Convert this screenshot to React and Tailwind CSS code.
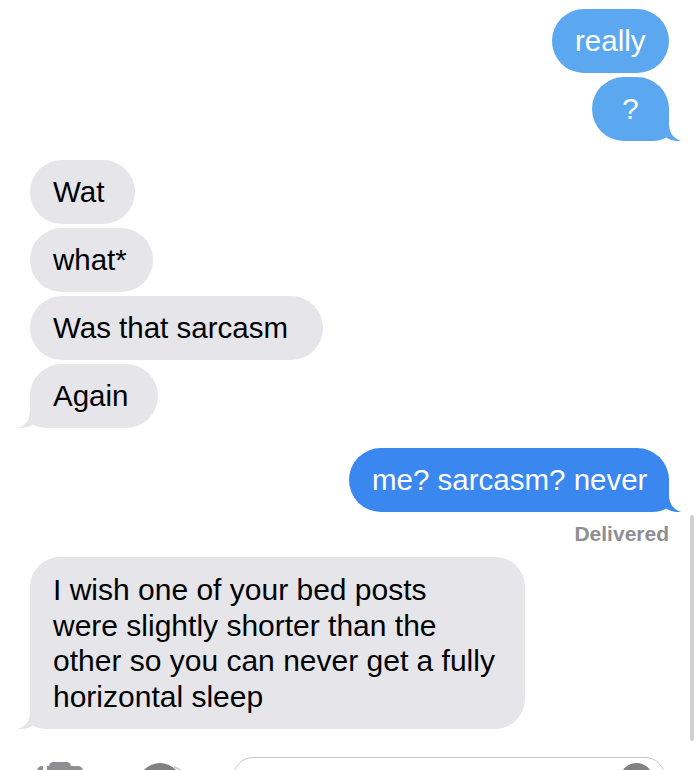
import React from 'react';

const font = { fontFamily: '"Liberation Sans", Arial, sans-serif' };

function Tail({ side, color }) {
    const pos = side === 'right' ? 'right-[-12px]' : 'left-[-12px] -scale-x-100';
    return (
        <svg
            className={`absolute bottom-0 ${pos}`}
            width="44"
            height="34"
            viewBox="0 0 44 34"
        >
            <path
                d="M0 0 H32 V16 C32 26 36 31 44 34 C38 34.5 33 33 29 30.5 C26 32.8 21 34 15 34 H0 Z"
                fill={color}
            />
        </svg>
    );
}

function Sent({ text, width, color, tail, center }) {
    return (
        <div
            className={`relative self-end h-[64px] rounded-full flex items-center text-white text-[29.5px] leading-none ${center ? 'justify-center' : 'pl-[23px]'}`}
            style={{ width, backgroundColor: color }}
        >
            {tail && <Tail side="right" color={color} />}
            <span className="relative">{text}</span>
        </div>
    );
}

function Received({ text, width, tail }) {
    return (
        <div
            className="relative self-start h-[64px] rounded-full bg-[#e5e5ea] flex items-center pl-[23px] text-black text-[29.5px] leading-none"
            style={{ width }}
        >
            {tail && <Tail side="left" color="#e5e5ea" />}
            <span className="relative">{text}</span>
        </div>
    );
}

export default function App() {
    return (
        <div className="relative w-[700px] h-[770px] overflow-hidden bg-white" style={font}>
            <div className="flex flex-col pl-[30px] pr-[31px] pt-[9px]">
                <div className="flex flex-col gap-[4px]">
                    <Sent text="really" width="117px" color="#5ba7f0" />
                    <Sent text="?" width="77px" color="#5ba7f0" tail center />
                </div>

                <div className="flex flex-col gap-[4px] mt-[19px]">
                    <Received text="Wat" width="105px" />
                    <Received text="what*" width="123px" />
                    <Received text="Was that sarcasm" width="293px" />
                    <Received text="Again" width="128px" tail />
                </div>

                <div className="mt-[20px]">
                    <div className="flex justify-end">
                        <Sent text="me? sarcasm? never" width="320px" color="#3a87f0" tail />
                    </div>
                </div>

                <div className="flex justify-end mt-[10px] mb-[11px] h-[24px] items-center text-[21px] font-bold text-[#8e8e93]">
                    Delivered
                </div>

                <div className="relative self-start w-[495px] rounded-[30px] bg-[#e5e5ea] pl-[23px] pr-[20px] py-[15px] text-black text-[30px] leading-[35.5px]">
                    <Tail side="left" color="#e5e5ea" />
                    <p className="relative">
                        I wish one of your bed posts<br />
                        were slightly shorter than the<br />
                        other so you can never get a fully<br />
                        horizontal sleep
                    </p>
                </div>
            </div>

            {/* input bar, mostly cut off */}
            <div className="flex items-start mt-[28px]">
                <svg className="ml-[37px] mt-[5px]" width="46" height="40" viewBox="0 0 46 40">
                    <rect x="0" y="4" width="46" height="34" rx="5" fill="#8e8e93" />
                    <path d="M10 8 L13 1.5 Q14 0 16 0 H30 Q32 0 33 1.5 L36 8 Z" fill="#8e8e93" />
                    <rect x="6" y="4" width="4" height="4" fill="#fff" />
                </svg>
                <svg className="ml-[55px] mt-[6px]" width="56" height="50" viewBox="0 0 56 50">
                    <circle cx="22" cy="22" r="22" fill="#7f8185" />
                    <path d="M36 4 A24 24 0 0 1 52 22" fill="none" stroke="#c7c7cc" strokeWidth="1.5" />
                </svg>
                <div className="ml-[39px] w-[432px] h-[40px] rounded-full border-[1.5px] border-[#c7c7cc] flex justify-end pr-[11px] pt-[5px]">
                    <div className="w-[33px] h-[33px] rounded-full bg-[#7f8185]" />
                </div>
            </div>

            {/* scroll indicator */}
            <div className="absolute left-[690px] top-[515px] w-[4px] h-[226px] rounded-full bg-[#d0d0d0]" />
        </div>
    );
}
